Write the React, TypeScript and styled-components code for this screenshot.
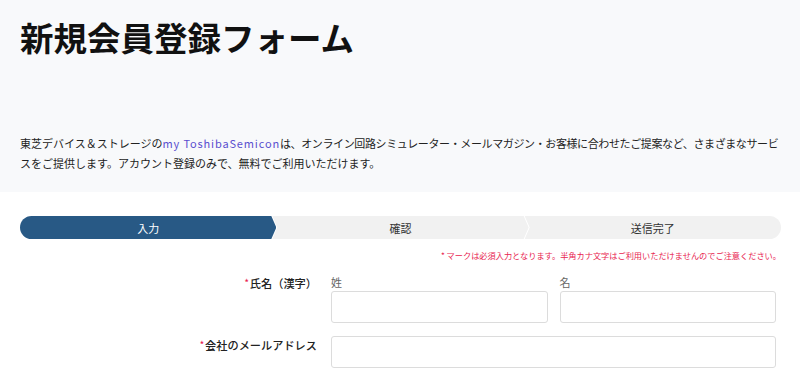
import React from 'react'
import styled, { createGlobalStyle } from 'styled-components'

const GlobalStyle = createGlobalStyle`
    body {
        margin: 0;
        background: #fff;
        font-family: "Noto Sans CJK JP", "Noto Sans", sans-serif;
        color: #222;
    }
    * { box-sizing: border-box; }
`

const steps = ['入力', '確認', '送信完了']

const App = () => {
  return (
    <>
      <GlobalStyle />
      <Header>
          <Title>新規会員登録フォーム</Title>
          <Lead>
              東芝デバイス＆ストレージの<LeadLink>my ToshibaSemicon</LeadLink><Tight>は、オンライン回路シミュレーター・メールマガジン・お客様に合わせたご提案など、さまざまなサービ</Tight><br />スをご提供します。アカウント登録のみで、無料でご利用いただけます。
          </Lead>
      </Header>
      <Main>
          <Steps>
              {steps.map((s, i) => (
                  <Step key={s} $active={i === 0} $first={i === 0} $last={i === steps.length - 1}>{s}</Step>
              ))}
          </Steps>
          <Note>* マークは必須入力となります。半角カナ文字はご利用いただけませんのでご注意ください。</Note>
          <Row>
              <Label><Req>*</Req>氏名（漢字）</Label>
              <Fields>
                  <Field>
                      <SubLabel>姓</SubLabel>
                      <Input type="text" />
                  </Field>
                  <Field>
                      <SubLabel>名</SubLabel>
                      <Input type="text" />
                  </Field>
              </Fields>
          </Row>
          <Row>
              <Label><Req>*</Req>会社のメールアドレス</Label>
              <Fields>
                  <Field>
                      <Input type="email" />
                  </Field>
              </Fields>
          </Row>
      </Main>
    </>
  )
}

export default App

const Header = styled.div`
    width: 100%;
    background-color: #f8f9fb;
    padding: 17px 20px 19px;
`
const Title = styled.h1`
    margin: 0;
    font-size: 33.5px;
    line-height: 40px;
    font-weight: 700;
    color: #111;
    margin-bottom: 76px;
`
const Lead = styled.p`
    margin: 0 -12px 0 0;
    font-size: 11px;
    line-height: 20px;
    color: #222;
    white-space: nowrap;
`
const LeadLink = styled.a`
    color: #5a4fcf;
    text-decoration: none;
    letter-spacing: 0.85px;
`
const Tight = styled.span`
    letter-spacing: -0.38px;
`
const Main = styled.div`
    padding: 24px 19px 0 20px;
`
const Steps = styled.div`
    display: flex;
    height: 23px;
    border-radius: 12px;
    overflow: hidden;
`
const Step = styled.div<{ $active: boolean; $first: boolean; $last: boolean }>`
    flex: 1;
    display: flex;
    align-items: center;
    justify-content: center;
    font-size: 11px;
    color: ${p => p.$active ? '#fff' : '#333'};
    background-color: ${p => p.$active ? '#285985' : '#f1f1f1'};
    margin-left: ${p => p.$first ? '0' : '-4px'};
    position: relative;
    z-index: ${p => p.$first ? 3 : p.$last ? 1 : 2};
    clip-path: ${p => p.$first
        ? 'polygon(0 0, calc(100% - 5px) 0, 100% 50%, calc(100% - 5px) 100%, 0 100%)'
        : p.$last
            ? 'polygon(0 0, 100% 0, 100% 100%, 0 100%, 5px 50%)'
            : 'polygon(0 0, calc(100% - 5px) 0, 100% 50%, calc(100% - 5px) 100%, 0 100%, 5px 50%)'};
`
const Note = styled.p`
    margin: 10px 0 0 0;
    text-align: right;
    font-size: 8.2px;
    line-height: 12px;
    color: #e8244f;
`
const Row = styled.div`
    display: flex;
    align-items: flex-start;
    margin-top: 13px;
    padding-right: 5px;
`
const Label = styled.div`
    width: 311px;
    flex-shrink: 0;
    padding-right: 14px;
    text-align: right;
    font-size: 11.2px;
    line-height: 16px;
    font-weight: 500;
    color: #222;
    padding-top: 1px;
`
const Req = styled.span`
    color: #e8244f;
    font-size: 9px;
    vertical-align: top;
    margin-right: 1px;
`
const Fields = styled.div`
    flex: 1;
    display: flex;
    gap: 12px;
`
const Field = styled.div`
    flex: 1;
    display: flex;
    flex-direction: column;
`
const SubLabel = styled.span`
    font-size: 11px;
    line-height: 16px;
    color: #666;
    margin-bottom: 1px;
`
const Input = styled.input`
    width: 100%;
    height: 32px;
    border: 1px solid #dcdcdc;
    border-radius: 3px;
    background: #fff;
    outline: none;
`
